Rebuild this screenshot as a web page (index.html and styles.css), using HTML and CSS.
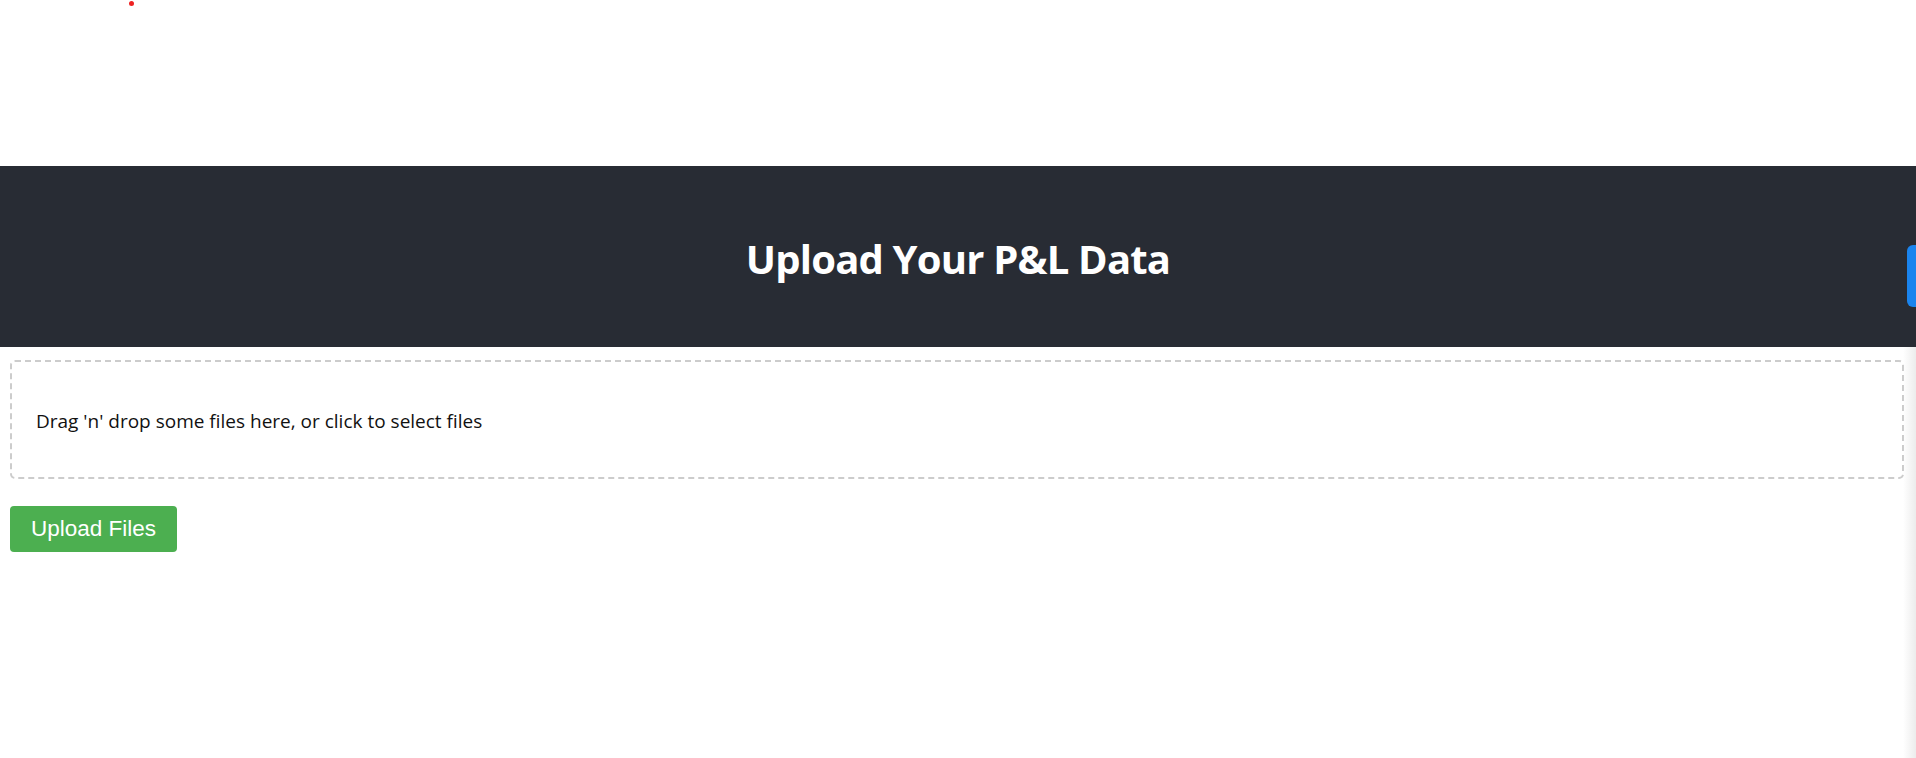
FILE: index.html
```html
<!DOCTYPE html>
<html lang="en">
<head>
<meta charset="utf-8">
<title>Upload Your P&amp;L Data</title>
<link rel="stylesheet" href="styles.css">
</head>
<body>
  <div class="top-space">
    <span class="red-dot"></span>
  </div>
  <header class="app-header">
    <h1 class="title">Upload Your P&amp;L Data</h1>
    <span class="side-tab"></span>
  </header>
  <main class="content">
    <div class="dropzone">
      <p class="dropzone-text">Drag 'n' drop some files here, or click to select files</p>
    </div>
    <button class="upload-btn" type="button">Upload Files</button>
  </main>
  <div class="edge-shade"></div>
</body>
</html>
```

FILE: styles.css
```css
html, body {
  margin: 0;
  padding: 0;
  background: #ffffff;
  height: 100%;
  overflow: hidden;
}

body {
  position: relative;
  font-family: "Open Sans", "Noto Sans", sans-serif;
}

.top-space {
  position: relative;
  height: 166px;
}

.red-dot {
  position: absolute;
  left: 129px;
  top: 1px;
  width: 5px;
  height: 5px;
  border-radius: 50%;
  background: #ee2222;
}

.app-header {
  position: relative;
  height: 181px;
  background: #282c34;
  display: flex;
  align-items: center;
  justify-content: center;
}

.title {
  margin: 0;
  color: #ffffff;
  font-family: "Open Sans", "Noto Sans", sans-serif;
  font-weight: 700;
  font-size: 40px;
  letter-spacing: -0.8px;
  line-height: 1;
  padding-top: 4px;
}

.side-tab {
  position: absolute;
  right: 0;
  top: 79px;
  width: 9px;
  height: 62px;
  background: #1a84ee;
  border-radius: 6px 0 0 6px;
}

.content {
  padding: 13px 12px 0 10px;
  display: flex;
  flex-direction: column;
  align-items: flex-start;
  gap: 27px;
}

.dropzone {
  box-sizing: border-box;
  width: 100%;
  height: 119px;
  border: 2px dashed #cccccc;
  border-radius: 5px;
  display: flex;
  align-items: center;
  padding: 0 24px;
}

.dropzone-text {
  margin: 0;
  color: #111111;
  font-family: "Open Sans", "Noto Sans", sans-serif;
  font-size: 19px;
  letter-spacing: 0;
  padding-top: 2px;
}

.upload-btn {
  height: 46px;
  padding: 0 21px;
  border: none;
  border-radius: 4px;
  background: #4caf50;
  color: #ffffff;
  font-family: "Liberation Sans", Arial, sans-serif;
  font-size: 22.5px;
  cursor: pointer;
}

.edge-shade {
  position: absolute;
  right: 0;
  top: 347px;
  bottom: 0;
  width: 13px;
  background: linear-gradient(to right, rgba(240, 240, 240, 0), #ececec);
  pointer-events: none;
}
```
